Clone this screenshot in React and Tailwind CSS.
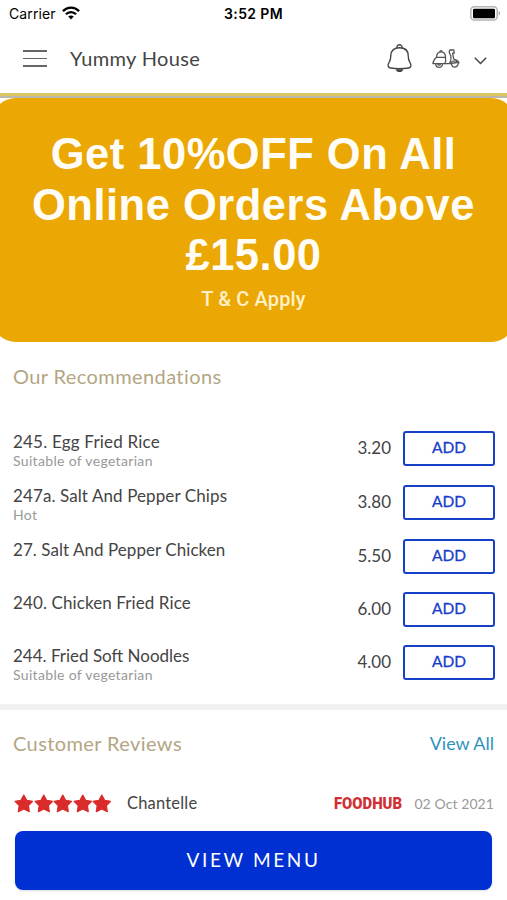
const menuItems = [
  { name: "245. Egg Fried Rice", note: "Suitable of vegetarian", price: "3.20", height: "h-[54px]", spacing: "tracking-[0.2px]" },
  { name: "247a. Salt And Pepper Chips", note: "Hot", price: "3.80", height: "h-[54px]", spacing: "tracking-[0.1px]" },
  { name: "27. Salt And Pepper Chicken", price: "5.50", height: "h-[53px]", spacing: "tracking-[0.05px]" },
  { name: "240. Chicken Fried Rice", price: "6.00", height: "h-[53px]", spacing: "tracking-[0.1px]" },
  { name: "244. Fried Soft Noodles", note: "Suitable of vegetarian", price: "4.00", height: "h-[59px]", spacing: "tracking-[0px]" }
];

const WifiIcon = () => (
  <svg width="18" height="14" viewBox="0 0 18 14" fill="none" stroke="#000" strokeWidth="2.3">
    <path d="M0.9 5.1C5.5 0.5 12.5 0.5 17.1 5.1" />
    <path d="M3.9 8.2C6.8 5.3 11.2 5.3 14.1 8.2" />
    <path d="M9 13.4L6.2 10.5C7.8 9 10.2 9 11.8 10.5Z" fill="#000" stroke="none" />
  </svg>
);

const BatteryIcon = () => (
  <svg width="31" height="15" viewBox="0 0 31 15">
    <rect x="0.8" y="0.8" width="26.4" height="13.2" rx="3.5" fill="#fff" stroke="#b5b5b5" strokeWidth="1.5" />
    <rect x="3" y="2.8" width="22" height="9.4" rx="1.2" fill="#000" />
    <path d="M28.6 5C30.6 6 30.6 8.8 28.6 9.8Z" fill="#aaa" />
  </svg>
);

const BellIcon = () => (
  <svg width="26" height="31" viewBox="0 0 26 31" fill="none" stroke="#454545" strokeWidth="1.4" strokeLinejoin="round">
    <path d="M10 5.2C9 0.6 16 0.6 15 5.2" />
    <path d="M12.5 4.8C7 4.8 3.8 7.8 3.8 12.5C3.8 16.5 3.6 17.6 2 19.6C0.4 21.8 0.9 24.6 3.4 25C9.5 26.1 15.5 26.1 21.6 25C24.1 24.6 24.6 21.8 23 19.6C21.4 17.6 21.2 16.5 21.2 12.5C21.2 7.8 18 4.8 12.5 4.8Z" />
    <path d="M8.8 26.2H16.2C15.9 30 9.1 30 8.8 26.2Z" fill="#454545" stroke="none" />
  </svg>
);

const ScooterIcon = () => (
  <svg width="28" height="20" viewBox="0 0 28 20" fill="none" stroke="#555" strokeWidth="1.3" strokeLinejoin="round" strokeLinecap="round">
    <path d="M4.5 8.3C4.5 4.7 6.4 2.8 9 2.8S13.5 4.7 13.5 8.3Z" />
    <path d="M7.9 2.7C7.9 1.3 10.1 1.3 10.1 2.7" />
    <path d="M4.5 8.3C3 9.3 1.4 11.5 0.9 14.6H17.4C18.8 12.4 19.5 10 18.8 6.8L17.2 3.2L17.8 1H21.8L22.3 4.2H20.6L21.7 10.2C24.2 10.8 26.4 12.3 27 14L23.9 11.9C21.2 11.8 19.3 13 18.8 14.6" />
    <path d="M13.5 8.3V10C14 11.3 13.7 13 12.8 14.6" />
    <path d="M3.7 14.8C3.7 19.6 10.5 19.6 10.5 14.8" />
    <path d="M5.8 14.8C6 16.5 8.2 16.5 8.4 14.8" />
    <path d="M19.6 14.4C19 19.3 26.3 19.5 26.2 14" />
    <path d="M18.8 14.6L24.8 13.5" />
  </svg>
);

const StarIcon = () => (
  <svg width="19.6" height="19" viewBox="0 0 20 19" fill="#da2b2b" stroke="#da2b2b" strokeWidth="1.2" strokeLinejoin="round">
    <path d="M10 0.9L12.9 6.2L18.9 7.2L14.7 11.6L15.6 17.8L10 15.2L4.4 17.8L5.3 11.6L1.1 7.2L7.1 6.2Z" />
  </svg>
);

const StatusBar = () => (
  <div className="grid h-[26px] grid-cols-3 items-center pl-[9px] pr-[6px] font-['Inter','Liberation_Sans',sans-serif] text-black">
    <div className="flex items-center gap-1.5">
      <span className="text-[14px] tracking-[0.1px]">Carrier</span>
      <WifiIcon />
    </div>
    <div className="pr-[3px] text-center text-[14px] font-semibold tracking-[0.35px]">3:52 PM</div>
    <div className="flex justify-end">
      <BatteryIcon />
    </div>
  </div>
);

const Header = () => (
  <header className="flex h-[67px] items-center pb-[2px] pl-[23px] pr-5">
    <button className="flex w-6 flex-col gap-[6px]" aria-label="Menu">
      <span className="h-[1.5px] bg-[#666]"></span>
      <span className="h-[1.5px] bg-[#666]"></span>
      <span className="h-[1.5px] bg-[#666]"></span>
    </button>
    <h1 className="ml-[23px] flex-1 pb-0.5 text-[20px] tracking-[0.35px]">Yummy House</h1>
    <BellIcon />
    <div className="ml-[19px]">
      <ScooterIcon />
    </div>
    <svg className="ml-[14px] mt-1" width="13" height="8" viewBox="0 0 13 8" fill="none" stroke="#444" strokeWidth="1.5">
      <path d="M0.8 0.8L6.5 6.5L12.2 0.8" />
    </svg>
  </header>
);

const Banner = () => (
  <div className="-mx-2 h-[244px] rounded-3xl bg-[#eba703] pt-[31px] text-center font-['Liberation_Sans',sans-serif] font-bold text-[#fffdf5]">
    <div className="text-[43.5px] leading-[50.5px] tracking-[0.5px]">
      <p>Get 10%OFF On All</p>
      <p>Online Orders Above</p>
      <p>£15.00</p>
    </div>
    <p className="mt-[6px] font-['Roboto',sans-serif] text-[20px] font-medium leading-6 tracking-[0.15px] text-[#fff0c8]">T &amp; C Apply</p>
  </div>
);

const MenuRow = ({ item }) => (
  <div className={`flex ${item.height}`}>
    <div className="flex-1 pt-px">
      <p className={`text-[17px] leading-5 ${item.spacing}`}>{item.name}</p>
      {item.note && <p className="-mt-px text-[14px] leading-5 tracking-[0.33px] text-[#999]">{item.note}</p>}
    </div>
    <span className="mr-[12px] text-[17px] leading-[33px]">{item.price}</span>
    <button className="h-[35px] w-[92px] rounded-[3px] border-2 border-[#1740c8] pb-[2px] text-[15.5px] text-[#1740c8] [-webkit-text-stroke:0.3px_#1740c8]">
      ADD
    </button>
  </div>
);

const App = () => {
  return (
    <div className="h-[900px] w-full overflow-hidden bg-white font-['Lato',sans-serif] text-[#444]">
      <StatusBar />
      <Header />
      <div className="h-[3px] bg-[#dcc663]"></div>
      <div className="h-[2px] bg-[#bcb9ad]"></div>
      <Banner />

      <section className="pl-[13px] pr-3 pt-5">
        <h2 className="text-[20px] leading-7 tracking-[0.4px] text-[#b3a683]">Our Recommendations</h2>
        <div className="pt-[41px]">
          {menuItems.map((item) => (
            <MenuRow key={item.name} item={item} />
          ))}
        </div>
      </section>

      <div className="h-[6px] bg-[#f1f1f1]"></div>

      <section className="px-[13px] pt-[19px]">
        <div className="flex items-center justify-between leading-7">
          <h2 className="text-[20px] tracking-[0.4px] text-[#b3a683]">Customer Reviews</h2>
          <a href="#" className="text-[18px] text-[#2f93bd]">View All</a>
        </div>
        <div className="mt-[34px] flex h-6 items-center">
          <div className="flex pl-px">
            {[1, 2, 3, 4, 5].map((star) => (
              <StarIcon key={star} />
            ))}
          </div>
          <span className="ml-[15px] flex-1 text-[16.5px] tracking-[0.2px]">Chantelle</span>
          <svg className="overflow-visible" width="69" height="24" viewBox="0 0 69 24">
            <text x="0" y="17.8" textLength="68" lengthAdjust="spacingAndGlyphs" className="fill-[#d02f35] font-['Roboto',sans-serif] text-[17px] font-black">FOODHUB</text>
          </svg>
          <span className="ml-[11px] text-[14px] tracking-[0.08px] text-[#999]">02 Oct 2021</span>
        </div>
      </section>

      <div className="px-[15px] pt-[16px]">
        <button className="h-[59px] w-full rounded-lg bg-[#002fd2] text-[19px] tracking-[2.6px] text-white shadow-sm">
          VIEW MENU
        </button>
      </div>
    </div>
  );
};

export default App;
